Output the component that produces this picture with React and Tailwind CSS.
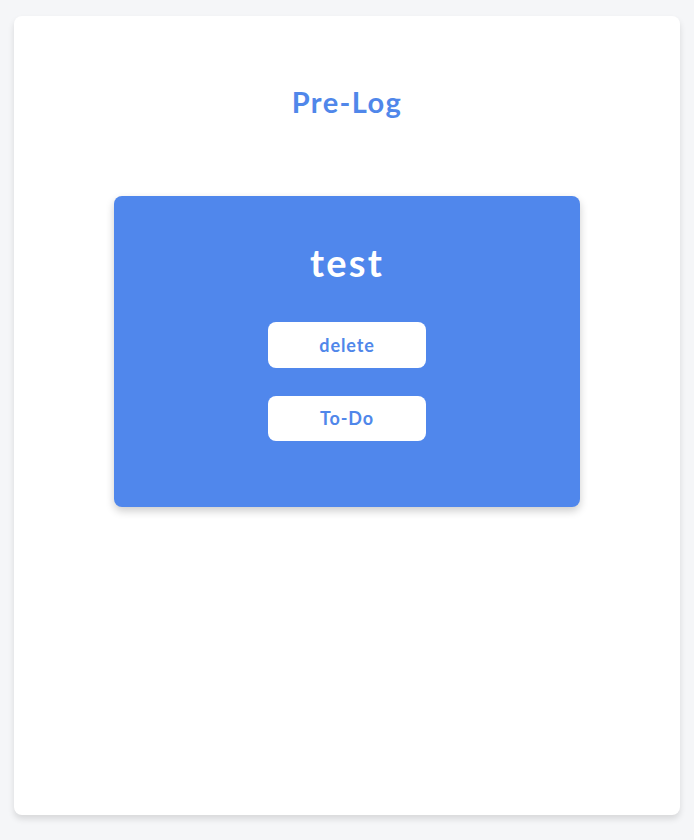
import React from 'react';

export default function App() {
  return (
    <div className="min-h-[840px] bg-[#f5f6f8] px-[14px] pt-[16px] pb-[25px]" style={{ fontFamily: 'Lato, "Open Sans", sans-serif' }}>
      <div className="h-[799px] rounded-lg bg-white shadow-[0_4px_6px_rgba(0,0,0,0.12)] flex flex-col items-center pt-[68px]">
        <h1 className="text-[29px] leading-[36px] font-bold tracking-[0.05em] text-[#5087ea]">Pre-Log</h1>

        <div className="mt-[76px] w-[466px] h-[311px] rounded-lg bg-[#5087ec] shadow-[0_4px_8px_rgba(0,0,0,0.2)] flex flex-col items-center pt-[44px]">
          <h2 className="text-[38px] leading-[44px] font-bold tracking-[0.06em] text-white">test</h2>
          <button className="mt-[38px] w-[158px] h-[46px] rounded-lg bg-white text-[18px] font-bold tracking-[0.05em] text-[#5087ea]">
            delete
          </button>
          <button className="mt-[28px] w-[158px] h-[45px] rounded-lg bg-white text-[18px] font-bold tracking-[0.05em] text-[#5087ea]">
            To-Do
          </button>
        </div>
      </div>
    </div>
  );
}
